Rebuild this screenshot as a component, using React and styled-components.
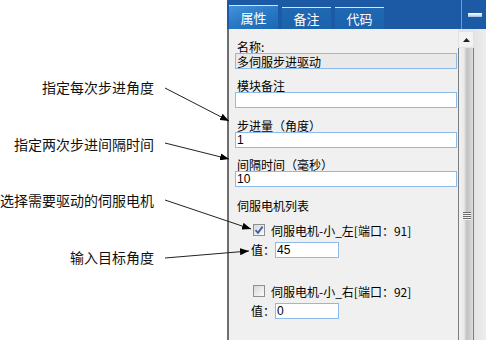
import React from 'react'
import styled, { createGlobalStyle } from 'styled-components'

const GlobalStyle = createGlobalStyle`
  html, body {
    margin: 0;
    padding: 0;
    background: #fff;
  }
  body {
    font-family: "Noto Sans CJK SC", "Liberation Sans", sans-serif;
  }
`

const Page = styled.div`
  position: relative;
  display: flex;
  width: 486px;
  height: 340px;
  overflow: hidden;
  background: #fff;
`

const Notes = styled.div`
  width: 227px;
  flex: none;
  box-sizing: border-box;
  padding: 59px 73px 0 0;
  display: grid;
  grid-auto-rows: 56.5px;
  align-items: center;
  justify-items: end;
`

const Note = styled.div`
  font-size: 14px;
  line-height: 18px;
  color: #111;
  white-space: nowrap;
`

const Arrows = styled.svg`
  position: absolute;
  left: 0;
  top: 0;
  pointer-events: none;
`

const Panel = styled.div`
  flex: 1;
  display: flex;
  flex-direction: column;
`

const Header = styled.div`
  height: 29px;
  flex: none;
  display: flex;
  align-items: flex-end;
  padding-left: 2px;
  background: #1c5aa5;
`

const Tab = styled.div`
  width: 49px;
  height: ${p => (p.active ? 23 : 21)}px;
  margin-right: 4px;
  border-top: 1px solid #d8e6f5;
  display: flex;
  align-items: center;
  justify-content: center;
  color: #fff;
  font-size: 13px;
  background: ${p =>
    p.active
      ? 'linear-gradient(160deg, #4393dc 0%, #2a7ac6 45%, #1a68b3 100%)'
      : 'linear-gradient(180deg, #2168b2 0%, #1b63ad 100%)'};
`

const HeaderGap = styled.div`
  flex: 1;
`

const HeaderRule = styled.div`
  align-self: stretch;
  width: 1px;
  background: #6c9ad3;
`

const Collapse = styled.div`
  align-self: stretch;
  width: 24px;
  display: flex;
  align-items: center;
  justify-content: center;
`

const CollapseBar = styled.div`
  width: 14px;
  height: 4px;
  margin-left: 1px;
  background: linear-gradient(180deg, #ffffff 0%, #c9dcf2 60%, #9bbbe2 100%);
`

const Body = styled.div`
  flex: 1;
  display: flex;
  border-left: 2px solid #6f6f6f;
  background: #f0f0f0;
  min-height: 0;
`

const Content = styled.div`
  width: 229px;
  box-sizing: border-box;
  padding: 11px 1px 0 6px;
  display: flex;
  flex-direction: column;
  font-size: 12px;
  color: #000;
`

const Field = styled.div`
  display: flex;
  flex-direction: column;
  margin-bottom: 10.4px;
`

const Label = styled.div`
  line-height: 13px;
  padding-left: 2px;
  white-space: nowrap;
`

const Box = styled.input`
  box-sizing: border-box;
  width: ${p => p.w || 222}px;
  height: 16px;
  margin: 0;
  padding: 0 1px;
  border: 1px solid #8dbbe9;
  background: ${p => (p.readOnly ? '#e9e9e9' : '#fff')};
  font-family: "Liberation Sans", "Noto Sans CJK SC", sans-serif;
  font-size: 12px;
  line-height: 14px;
  color: #000;
  outline: none;
`

const ListTitle = styled.div`
  line-height: 13px;
  padding-left: 2px;
  margin-top: 1.6px;
`

const Servo = styled.div`
  display: flex;
  flex-direction: column;
  margin-top: ${p => p.gap}px;
`

const CheckRow = styled.div`
  display: flex;
  align-items: center;
  height: 12px;
  padding-left: 18px;
  gap: 6px;
  white-space: nowrap;
`

const Check = styled.div`
  width: 12px;
  height: 12px;
  box-sizing: border-box;
  border: 1px solid #8e8f8f;
  background: linear-gradient(135deg, #d6d6d6 0%, #ececec 55%, #fbfbfb 100%);
  display: flex;
  align-items: center;
  justify-content: center;
`

const ValueRow = styled.div`
  display: flex;
  align-items: center;
  margin-top: 6px;
  padding-left: 16px;
`

const ValueLabel = styled.span`
  width: 24px;
  line-height: 16px;
`

const Scroll = styled.div`
  width: 16px;
  flex: none;
  display: flex;
  flex-direction: column;
  padding-top: 2px;
  background: #e6e6e6;
`

const ScrollUp = styled.div`
  height: 17px;
  display: flex;
  align-items: center;
  justify-content: center;
  background: #f3f3f3;
  border: 1px solid #e2e2e2;
  box-sizing: border-box;
`

const Track = styled.div`
  flex: 1;
  display: flex;
  flex-direction: column;
  align-items: center;
  padding-top: 164px;
  border-left: 1px solid #7c7c7c;
  border-right: 1px solid #7c7c7c;
  background: linear-gradient(90deg, #f1f1f1 0%, #eaeaea 35%, #c2c2c2 55%, #cfcfcf 80%, #dddddd 100%);
`

const Grip = styled.div`
  width: 8px;
  height: 8px;
  margin-left: 1px;
  background: repeating-linear-gradient(180deg, #6a6a6a 0 1px, #f4f4f4 1px 2px);
`

const Edge = styled.div`
  width: 12px;
  flex: none;
  background: linear-gradient(90deg, #e4e4e4 0%, #ededed 100%);
`

const notes = ['指定每次步进角度', '指定两次步进间隔时间', '选择需要驱动的伺服电机', '输入目标角度']

const arrows = [
  [165, 88, 229, 121],
  [165, 143, 229, 159],
  [165, 200, 251, 229],
  [165, 258, 249, 251],
]

const fields = [
  { label: '名称:', value: '多伺服步进驱动', readOnly: true },
  { label: '模块备注', value: '' },
  { label: '步进量（角度）', value: '1' },
  { label: '间隔时间（毫秒）', value: '10' },
]

const servos = [
  { name: '伺服电机-小_左[端口：91]', checked: true, value: '45', gap: 12 },
  { name: '伺服电机-小_右[端口：92]', checked: false, value: '0', gap: 27 },
]

const Tick = () => (
  <svg width="10" height="10" viewBox="0 0 10 10">
    <path d="M1.5 5.2 L4 7.8 L8.6 1.6" fill="none" stroke="#3f5aa6" strokeWidth="1.8" />
  </svg>
)

const App = () => (
  <Page>
    <GlobalStyle />
    <Notes>
      {notes.map(n => <Note key={n}>{n}</Note>)}
    </Notes>
    <Panel>
      <Header>
        <Tab active>属性</Tab>
        <Tab>备注</Tab>
        <Tab>代码</Tab>
        <HeaderGap />
        <HeaderRule />
        <Collapse><CollapseBar /></Collapse>
      </Header>
      <Body>
        <Content>
          {fields.map(f => (
            <Field key={f.label}>
              <Label>{f.label}</Label>
              <Box defaultValue={f.value} readOnly={f.readOnly} />
            </Field>
          ))}
          <ListTitle>伺服电机列表</ListTitle>
          {servos.map(s => (
            <Servo key={s.name} gap={s.gap}>
              <CheckRow>
                <Check>{s.checked && <Tick />}</Check>
                <span>{s.name}</span>
              </CheckRow>
              <ValueRow>
                <ValueLabel>值：</ValueLabel>
                <Box w={64} defaultValue={s.value} />
              </ValueRow>
            </Servo>
          ))}
        </Content>
        <Scroll>
          <ScrollUp>
            <svg width="7" height="4" viewBox="0 0 7 4">
              <path d="M0 4 L3.5 0 L7 4 Z" fill="#222" />
            </svg>
          </ScrollUp>
          <Track><Grip /></Track>
        </Scroll>
        <Edge />
      </Body>
    </Panel>
    <Arrows width="486" height="340" viewBox="0 0 486 340">
      <defs>
        <marker id="head" markerWidth="9" markerHeight="7" refX="9" refY="3.5" orient="auto" markerUnits="userSpaceOnUse">
          <path d="M0 0 L9 3.5 L0 7 Z" fill="#000" />
        </marker>
      </defs>
      {arrows.map(([x1, y1, x2, y2], i) => (
        <line key={i} x1={x1} y1={y1} x2={x2} y2={y2} stroke="#222" strokeWidth="1" markerEnd="url(#head)" />
      ))}
    </Arrows>
  </Page>
)

export default App
